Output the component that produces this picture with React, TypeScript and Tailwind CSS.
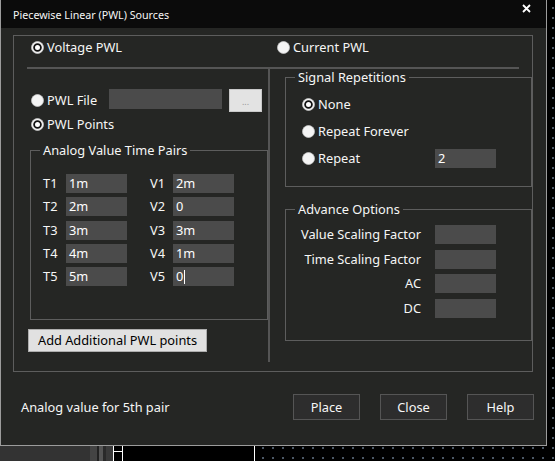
import type { ReactNode } from 'react';

const font = { fontFamily: '"Noto Sans", "Open Sans", sans-serif' };

function Radio({ checked = false }: { checked?: boolean }) {
  return (
    <svg width="13" height="13" viewBox="0 0 13 13" className="shrink-0">
      <circle cx="6.5" cy="6.5" r="6" fill="#f4f4f4" stroke="#c8c8c8" strokeWidth="0.8" />
      {checked && <circle cx="6.5" cy="6.5" r="3.4" fill="#ffffff" stroke="#111" strokeWidth="1.8" />}
    </svg>
  );
}

function RadioLabel({ checked, children }: { checked?: boolean; children: ReactNode }) {
  return (
    <div className="flex items-center gap-[3px]">
      <Radio checked={checked} />
      <span className="leading-none">{children}</span>
    </div>
  );
}

function Field({ value = '', caret = false }: { value?: string; caret?: boolean }) {
  return (
    <div className="flex h-[19px] w-[61px] items-center bg-[#4b4b4b] pl-[3px] text-white">
      <span className="leading-none">{value}</span>
      {caret && <span className="ml-px h-[14px] w-px bg-white" />}
    </div>
  );
}

function Group({ title, className, children }: { title: string; className: string; children: ReactNode }) {
  return (
    <fieldset className={`border border-[#5d5d5d] ${className}`}>
      <legend className="ml-[9px] px-[3px] text-[12.8px] leading-[17px]">{title}</legend>
      {children}
    </fieldset>
  );
}

const pairs = [
  ['1m', '2m'],
  ['2m', '0'],
  ['3m', '3m'],
  ['4m', '1m'],
  ['5m', '0'],
];

export default function App() {
  return (
    <div
      className="flex h-[461px] w-[555px] flex-col overflow-hidden bg-black bg-[radial-gradient(circle,#4c5866_0.8px,transparent_1px)] bg-[size:10px_10px] bg-[position:-2px_3px] text-[12.8px] text-[#f6f6f6]"
      style={font}
    >
      <div className="flex h-[446px] w-[547px] shrink-0 flex-col border-x border-b border-[#9c9c9c] bg-[#252624]">
        {/* title bar */}
        <div className="flex h-[28px] shrink-0 justify-between bg-[#0b0b0b]">
          <span className="ml-[12px] mt-[10px] text-[10.7px] leading-none">Piecewise Linear (PWL) Sources</span>
          <svg width="9" height="9" viewBox="0 0 9 9" className="mr-[15px] mt-[4px]">
            <path d="M1 1 L8 8 M8 1 L1 8" stroke="#fff" strokeWidth="1.8" />
          </svg>
        </div>

        {/* main group */}
        <div className="ml-[12px] mt-[7px] flex h-[337px] w-[520px] flex-col border border-[#5d5d5d]">
          <div className="flex h-[21px] items-center pl-[17px] pt-px">
            <div className="w-[246px]">
              <RadioLabel checked>Voltage PWL</RadioLabel>
            </div>
            <RadioLabel>Current PWL</RadioLabel>
          </div>
          <div className="ml-[13px] mt-[10px] h-[2px] w-[492px] bg-[#555]" />

          <div className="flex">
            {/* left column */}
            <div className="flex w-[254px] flex-col">
              <div className="mt-[20px] flex h-[23px] items-center pl-[17px]">
                <div className="w-[78px]">
                  <RadioLabel>PWL File</RadioLabel>
                </div>
                <div className="h-[20px] w-[113px] self-start bg-[#4b4b4b]" />
                <div className="ml-[7px] flex h-[23px] w-[33px] items-end justify-center border border-[#c9c9c9] bg-[#e3e3e3] pb-[5px] text-[9px] leading-none text-[#9a9a9a]">
                  ...
                </div>
              </div>
              <div className="mt-[2px] flex h-[20px] items-center pl-[17px]">
                <RadioLabel checked>PWL Points</RadioLabel>
              </div>

              <Group title="Analog Value Time Pairs" className="ml-[16px] mt-[8px] h-[178px] w-[238px]">
                <div className="mt-[15px] flex flex-col gap-[4.3px] pl-[12px]">
                  {pairs.map(([t, v], i) => (
                    <div key={i} className="flex items-center">
                      <span className="w-[23px] leading-none">T{i + 1}</span>
                      <Field value={t} />
                      <span className="ml-[23px] w-[23px] leading-none">V{i + 1}</span>
                      <Field value={v} caret={i === 4} />
                    </div>
                  ))}
                </div>
              </Group>

              <div className="ml-[14px] mt-[9px] flex h-[23px] w-[179px] items-center justify-center border border-[#adadad] bg-[#e1e1e1] leading-none text-black">
                Add Additional PWL points
              </div>
            </div>

            <div className="h-[293px] w-[2px] bg-[#555]" />

            {/* right column */}
            <div className="flex flex-col">
              <Group title="Signal Repetitions" className="ml-[15px] h-[118px] w-[247px]">
                <div className="mt-[8px] flex flex-col gap-[7px] pl-[16px]">
                  <div className="flex h-[20px] items-center">
                    <RadioLabel checked>None</RadioLabel>
                  </div>
                  <div className="flex h-[20px] items-center">
                    <RadioLabel>Repeat Forever</RadioLabel>
                  </div>
                  <div className="flex h-[20px] items-center">
                    <div className="w-[133px]">
                      <RadioLabel>Repeat</RadioLabel>
                    </div>
                    <Field value="2" />
                  </div>
                </div>
              </Group>

              <Group title="Advance Options" className="ml-[15px] mt-[14px] h-[140px] w-[247px]">
                <div className="mt-[7px] flex flex-col gap-[5.6px]">
                  {['Value Scaling Factor', 'Time Scaling Factor', 'AC', 'DC'].map((label) => (
                    <div key={label} className="flex items-center">
                      <span className="w-[135px] text-right leading-none">{label}</span>
                      <div className="ml-[14px]">
                        <Field />
                      </div>
                    </div>
                  ))}
                </div>
              </Group>
            </div>
          </div>
        </div>

        {/* footer */}
        <div className="mt-[22px] flex h-[26px] items-center pl-[20px] pr-[12px]">
          <span className="leading-none">Analog value for 5th pair</span>
          <div className="ml-auto flex gap-[20px]">
            {['Place', 'Close', 'Help'].map((b) => (
              <div
                key={b}
                className="flex h-[26px] w-[67px] items-center justify-center border border-[#555] bg-[#2d2d2d] leading-none"
              >
                {b}
              </div>
            ))}
          </div>
        </div>
      </div>

      {/* strip of the window behind */}
      <div className="flex h-[15px]">
        <div className="w-[90px] bg-[#333]" />
        <div className="w-[23px] bg-[linear-gradient(90deg,#444_0_30%,#222_30%_40%,#555_40%_55%,#2a2a2a_55%_70%,#3a3a3a_70%)]" />
        <div className="flex w-[10px] flex-col border-x border-white bg-black">
          <div className="mt-[5px] h-px bg-white" />
        </div>
        <div className="w-[131px] bg-black" />
        <div className="w-px bg-white" />
      </div>
    </div>
  );
}
